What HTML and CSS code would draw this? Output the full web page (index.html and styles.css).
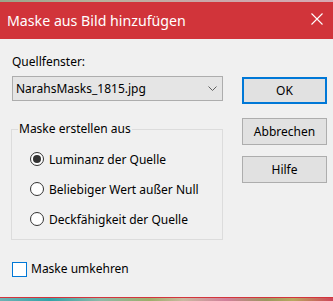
FILE: index.html
```html
<!DOCTYPE html>
<html lang="de">
<head>
<meta charset="utf-8">
<title>Maske aus Bild hinzufügen</title>
<link rel="stylesheet" href="styles.css">
</head>
<body>
<div class="strip strip-top"></div>
<div class="dialog">
  <div class="titlebar">
    <span class="title">Maske aus Bild hinzufügen</span>
    <svg class="close" width="12" height="12" viewBox="0 0 12 12" aria-label="Schließen">
      <path d="M0.5 0.5 L11.5 11.5 M11.5 0.5 L0.5 11.5" stroke="#ffffff" stroke-width="1.1" fill="none"/>
    </svg>
  </div>
  <div class="content">
    <div class="left">
      <div class="label">Quellfenster:</div>
      <div class="select">
        <span class="select-text">NarahsMasks_1815.jpg</span>
        <svg class="chevron" width="9" height="5" viewBox="0 0 9 5">
          <path d="M0.5 0.5 L4.5 4.5 L8.5 0.5" stroke="#606060" stroke-width="1" fill="none"/>
        </svg>
      </div>
      <fieldset class="group">
        <legend class="legend">Maske erstellen aus</legend>
        <div class="radio-row"><span class="radio checked"></span><span>Luminanz der Quelle</span></div>
        <div class="radio-row"><span class="radio"></span><span>Beliebiger Wert außer Null</span></div>
        <div class="radio-row"><span class="radio"></span><span>Deckfähigkeit der Quelle</span></div>
      </fieldset>
      <div class="check-row"><span class="checkbox"></span><span>Maske umkehren</span></div>
    </div>
    <div class="right">
      <div class="btn btn-default">OK</div>
      <div class="btn btn-cancel">Abbrechen</div>
      <div class="btn btn-help">Hilfe</div>
    </div>
  </div>
</div>
<div class="strip strip-bottom"></div>
</body>
</html>
```
FILE: styles.css
```css
html, body {
  margin: 0;
  padding: 0;
}
body {
  width: 333px;
  height: 301px;
  overflow: hidden;
  font-family: "Noto Sans", "Open Sans", sans-serif;
  font-size: 12px;
  color: #000;
  background: #f0f0f0;
}
.strip {
  width: 100%;
}
.strip-top {
  height: 2px;
  background: linear-gradient(90deg, #9aa58a 0%, #b7b29c 30%, #c9a7a8 60%, #d7a9b3 100%);
}
.strip-bottom {
  height: 3px;
  background: linear-gradient(90deg, #6fb2b4 0%, #33a3a8 15%, #8fb9a8 30%, #9fae6a 45%, #c9b9a0 55%, #d17f9a 68%, #9d9860 80%, #b8a860 88%, #d0455a 100%);
}
.dialog {
  background: #f0f0f0;
  border-bottom: 1px solid #d4343c;
}
.titlebar {
  height: 37px;
  background: #d1343a;
  display: flex;
  align-items: center;
  justify-content: space-between;
  padding: 0 10px 0 7px;
}
.title {
  color: #ffffff;
  font-size: 14.2px;
  line-height: 18px;
  padding-top: 1px;
}
.close {
  display: block;
  margin-top: -4px;
}
.content {
  height: 258px;
  display: flex;
  padding: 0 6px 0 12px;
  gap: 19px;
}
.left {
  width: 211px;
  display: flex;
  flex-direction: column;
}
.label {
  line-height: 16px;
  margin-top: 15px;
}
.select {
  margin-top: 6px;
  height: 25px;
  box-sizing: border-box;
  border: 1px solid #adadad;
  background: #e5e5e5;
  display: flex;
  align-items: center;
  justify-content: space-between;
  padding: 0 5px 0 3px;
}
.select-text {
  line-height: 16px;
}
.chevron {
  display: block;
}
.group {
  margin: 20px 0 0 -1px;
  padding: 7px 0 5px 18px;
  border: 1px solid #dcdcdc;
  min-width: 0;
}
.legend {
  padding: 0 1px;
  margin-left: -12px;
  line-height: 16px;
}
.radio-row {
  height: 30px;
  display: flex;
  align-items: center;
  gap: 5px;
}
.radio {
  width: 14px;
  height: 14px;
  box-sizing: border-box;
  border: 1px solid #333333;
  border-radius: 50%;
  background: #ffffff;
  display: flex;
  align-items: center;
  justify-content: center;
}
.radio.checked::after {
  content: "";
  width: 8px;
  height: 8px;
  border-radius: 50%;
  background: #333333;
}
.check-row {
  margin-top: 21px;
  display: flex;
  align-items: center;
  gap: 4px;
  line-height: 16px;
}
.checkbox {
  width: 15px;
  height: 15px;
  box-sizing: border-box;
  border: 1px solid #0078d7;
  background: #ffffff;
}
.right {
  width: 85px;
  display: flex;
  flex-direction: column;
}
.btn {
  height: 27px;
  box-sizing: border-box;
  border: 1px solid #adadad;
  background: #e1e1e1;
  display: flex;
  align-items: center;
  justify-content: center;
  line-height: 16px;
}
.btn-default {
  margin-top: 38px;
  border: 2px solid #0078d7;
}
.btn-cancel {
  margin-top: 14px;
}
.btn-help {
  margin-top: 11px;
}
```
